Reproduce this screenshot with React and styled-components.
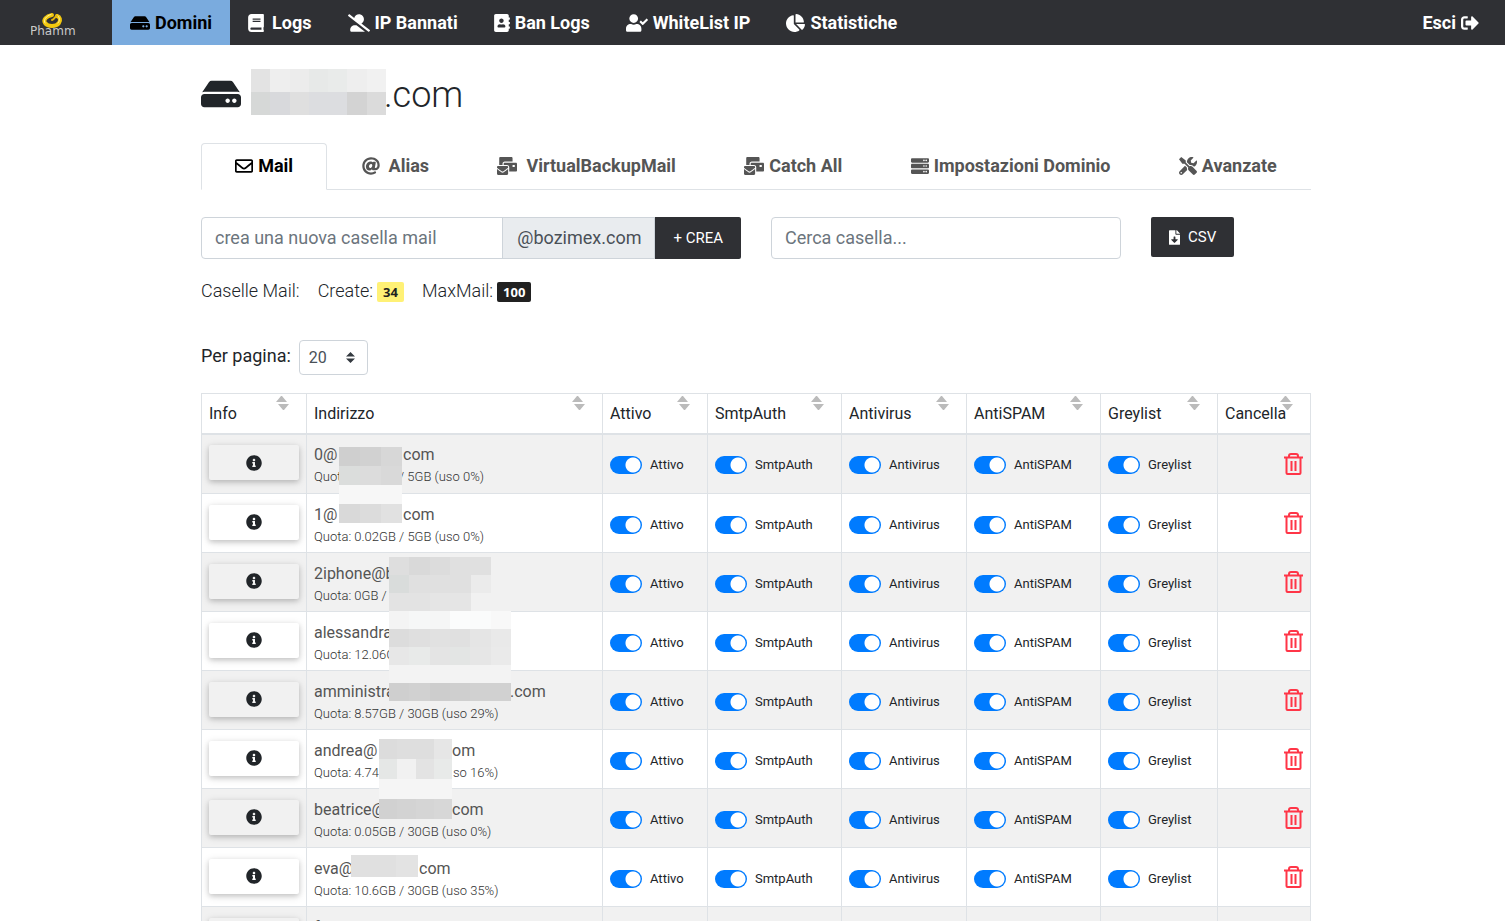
import React from "react";
import styled, { createGlobalStyle, css } from "styled-components";
import {
  FaHdd, FaBook, FaUserAltSlash, FaAddressBook, FaUserCheck, FaChartPie, FaSignOutAlt,
  FaRegEnvelope, FaAt, FaMailBulk, FaServer, FaTools, FaFileDownload, FaInfoCircle,
} from "react-icons/fa";

const GlobalStyle = createGlobalStyle`
  *, *::before, *::after { box-sizing: border-box; }
  body {
    margin: 0;
    background: #fff;
    color: #212529;
    font-family: Roboto, "Liberation Sans", sans-serif;
    font-size: 16px;
    line-height: 24px;
  }
  button, input, select { font-family: inherit; margin: 0; }
`;

/* Font Awesome glyphs differ in width, so each use gives the width of its glyph. */
const iconSize = css`
  svg { height: 1em; width: ${(p) => p.$icon || 18}px; flex: none; }
`;

const NavBar = styled.nav`
  display: flex;
  height: 45px;
  background: #2f3034;
`;

const Brand = styled.a`
  width: 112px;
  padding: 12px 0 0 31px;
  svg { display: block; }
`;

const NavLink = styled.a`
  display: flex;
  align-items: center;
  gap: ${(p) => (p.$wide ? 8 : 5)}px;
  padding: 0 18px;
  font-size: 18px;
  font-weight: 700;
  text-decoration: none;
  white-space: nowrap;
  color: ${(p) => (p.$active ? "#000" : "#fff")};
  background: ${(p) => (p.$active ? "#7aabde" : "transparent")};
  ${iconSize}
`;

const LogoutLink = styled(NavLink)`
  margin-left: auto;
  padding-right: 26px;
`;

const Main = styled.main`
  padding: 24px 0 24px 7px;
`;

const Container = styled.div`
  max-width: 1110px;
  margin: 0 auto;
`;

const Title = styled.h1`
  display: flex;
  align-items: center;
  gap: 10px;
  margin: 0 0 28px;
  font-size: 36px;
  line-height: 46px;
  font-weight: 300;
  > svg { height: 40px; width: 40px; margin-top: 3px; }
`;

const TitleText = styled.span`
  display: flex;
  padding-top: 6px;
  line-height: 40px;
`;

const Tabs = styled.div`
  display: flex;
  border-bottom: 1px solid #dee2e6;
`;

const Tab = styled.button`
  display: flex;
  flex: 1 1 auto;
  align-items: center;
  justify-content: center;
  gap: ${(p) => (p.$wide ? 9 : 5)}px;
  height: 47px;
  margin-bottom: -1px;
  padding: 0 16px 2px;
  border: 1px solid ${(p) => (p.$active ? "#dee2e6" : "transparent")};
  border-bottom-color: ${(p) => (p.$active ? "#fff" : "transparent")};
  border-radius: 4px 4px 0 0;
  background: ${(p) => (p.$active ? "#fff" : "transparent")};
  color: ${(p) => (p.$active ? "#000" : "#555")};
  font-size: 18px;
  font-weight: 700;
  white-space: nowrap;
  ${iconSize}
`;

const Controls = styled.div`
  display: grid;
  grid-template-columns: repeat(12, 1fr);
  gap: 30px;
  align-items: start;
  margin-top: 27px;
`;

const CreateGroup = styled.form`
  grid-column: span 6;
  display: flex;
  height: 42px;
`;

const TextField = styled.input`
  flex: 1;
  width: 100%;
  min-width: 0;
  height: 42px;
  padding: 0 13px 2px;
  border: 1px solid #ced4da;
  border-radius: ${(p) => (p.$joined ? "4px 0 0 4px" : "4px")};
  font-size: 18px;
  color: #495057;
  &::placeholder { color: #6c757d; opacity: 1; }
`;

const Suffix = styled.span`
  display: flex;
  align-items: center;
  margin-left: -1px;
  padding: 0 13px 0 14px;
  border: 1px solid #ced4da;
  background: #e9ecef;
  color: #495057;
  font-size: 18px;
`;

const DarkButton = styled.button`
  display: flex;
  align-items: center;
  gap: 8px;
  height: ${(p) => (p.$joined ? 42 : 40)}px;
  padding: 0 18px;
  border: 0;
  border-radius: ${(p) => (p.$joined ? "0 2px 2px 0" : "2px")};
  background: #2f3034;
  color: #fff;
  font-size: 15px;
  white-space: nowrap;
  ${iconSize}
`;

const SearchBox = styled.div`
  grid-column: span 4;
  display: flex;
`;

const Export = styled.div`
  grid-column: span 2;
`;

const Summary = styled.div`
  display: flex;
  align-items: center;
  gap: 18px;
  margin-top: 20px;
  font-size: 18px;
  font-weight: 300;
`;

const Badge = styled.strong`
  display: inline-block;
  margin-left: 4px;
  padding: 0 6px;
  border-radius: 2px;
  background: ${(p) => (p.$dark ? "#212121" : "#fff176")};
  color: ${(p) => (p.$dark ? "#fff" : "#212121")};
  font: 700 13px/20px "Open Sans", sans-serif;
`;

const PageSize = styled.label`
  display: flex;
  align-items: flex-start;
  gap: 8px;
  margin: 37px 0 18px;
  height: 35px;
  font-size: 18px;
  line-height: 32px;
`;

const SelectWrap = styled.span`
  position: relative;
  display: flex;
  svg { position: absolute; right: 13px; top: 12px; pointer-events: none; }
`;

const Select = styled.select`
  appearance: none;
  width: 69px;
  height: 35px;
  padding: 0 9px;
  border: 1px solid #ced4da;
  border-radius: 4px;
  background: #fff;
  color: #495057;
  font-size: 16px;
`;

const Table = styled.table`
  width: 100%;
  table-layout: fixed;
  border-collapse: collapse;
`;

const HeadCell = styled.th`
  position: relative;
  height: 40px;
  padding: 2px 7px 0;
  border: 1px solid #dee2e6;
  border-bottom-width: 2px;
  font-weight: 400;
  text-align: left;
  > svg { position: absolute; right: 17px; top: 2px; }
`;

const Row = styled.tr`
  height: 59px;
  background: #fff;
  &:nth-child(odd) { background: #f1f1f1; }
  &:first-child { height: 60px; }
`;

const Cell = styled.td`
  position: relative;
  padding: 0 7px;
  border: 1px solid #dee2e6;
`;

const AddressCell = styled(Cell)`
  padding-top: 3px;
`;

const ActionCell = styled(Cell)`
  padding-bottom: 2px;
  text-align: right;
`;

const InfoButton = styled.button`
  display: flex;
  align-items: center;
  justify-content: center;
  width: 100%;
  height: 35px;
  padding: 0;
  border: 0;
  border-radius: 2px;
  background: transparent;
  color: #212529;
  font-size: 16px;
  box-shadow: 0 2px 5px rgba(0, 0, 0, 0.16), 0 2px 10px rgba(0, 0, 0, 0.12);
`;

const Line = styled.div`
  display: flex;
  white-space: pre;
  color: ${(p) => (p.$small ? "#333" : "#555")};
  font-size: ${(p) => (p.$small ? 13 : 16)}px;
  font-weight: ${(p) => (p.$small ? 300 : 400)};
  line-height: ${(p) => (p.$small ? 20 : 24)}px;
`;

const Lead = styled.span`
  flex: none;
  width: ${(p) => (p.$width ? `${p.$width}px` : "auto")};
`;

const MosaicGrid = styled.span`
  position: absolute;
  z-index: 1;
  left: ${(p) => p.$left}px;
  top: ${(p) => p.$top}px;
  width: ${(p) => p.$width}px;
  display: grid;
  grid-template-columns: repeat(${(p) => p.$cols}, 1fr);
  grid-auto-rows: ${(p) => p.$tile}px;
`;

const TitleMosaic = styled.span`
  display: grid;
  grid-template-columns: repeat(7, 1fr);
  grid-auto-rows: 23px;
  width: 135px;
  margin-right: -12px;
`;

const Tile = styled.span`
  background: ${(p) => p.$tone};
`;

const Toggle = styled.label`
  display: flex;
  align-items: center;
  gap: 8px;
  padding-top: 3px;
  font-size: 13px;
  line-height: 18px;
`;

const Switch = styled.input`
  appearance: none;
  flex: none;
  width: 32px;
  height: 18px;
  border-radius: 9px;
  background: radial-gradient(circle at 23px 9px, #fff 7px, #007bff 8px);
  &:not(:checked) {
    background: radial-gradient(circle at 9px 9px, #fff 7px, #adb5bd 8px);
  }
`;

const DeleteButton = styled.button`
  padding: 0;
  border: 0;
  background: none;
  vertical-align: middle;
  svg { display: block; }
`;

const Logo = () => (
  <svg width="48" height="26" viewBox="0 0 48 26" role="img" aria-label="Phamm">
    <g fill="none" strokeLinecap="round">
      <path d="M21 3 C15 4 12 8 14 11 C17 15 25 15 28 11 C30 8 29 5 26 4" stroke="#f2c80f" strokeWidth="4" />
      <path d="M26 4 C23 5 24 7 21 8" stroke="#e5b60a" strokeWidth="2" />
      <path d="M20 2.500 C15 4 12 8 14 11 M27 4 C29 6 29 9 27 11" stroke="#fff3a0" strokeWidth="1" />
    </g>
    <text x="-1" y="23" fill="#c9c9c9" fontFamily="DejaVu Sans" fontSize="12">Phamm</text>
  </svg>
);

const SortArrows = () => (
  <svg width="13" height="14" viewBox="0 0 13 14" fill="#bbb" aria-hidden="true">
    <path d="M0 6 L5 0 H6 L11 6 Z M2 8 H13 L8 14 H7 Z" />
  </svg>
);

const SelectArrows = () => (
  <svg width="9" height="11" viewBox="0 0 9 11" fill="#343a40" aria-hidden="true">
    <path d="M0 4.500 L4.500 0 L9 4.500 Z M0 6.500 H9 L4.500 11 Z" />
  </svg>
);

const TrashIcon = () => (
  <svg width="19" height="22" viewBox="0 0 19 22" fill="none" stroke="#ff3547" strokeWidth="2" aria-hidden="true">
    <path d="M0 4.500 H19 M5 4 V3 Q5 1 7 1 H12 Q14 1 14 3 V4 M2.500 4.500 V20 Q2.500 21 3.500 21 H15.500 Q16.500 21 16.500 20 V4.500 M7.500 8 V18 M11.500 8 V18" />
  </svg>
);

const Mosaic = ({ left, top, width, tile, rows }) => (
  <MosaicGrid $left={left} $top={top} $width={width} $tile={tile} $cols={rows[0].length} aria-hidden="true">
    {rows.flat().map((tone, i) => <Tile key={i} $tone={tone} />)}
  </MosaicGrid>
);

const navItems = [
  { label: "Domini", icon: FaHdd, size: 20, active: true },
  { label: "Logs", icon: FaBook, size: 16, wide: true },
  { label: "IP Bannati", icon: FaUserAltSlash, size: 22 },
  { label: "Ban Logs", icon: FaAddressBook, size: 16 },
  { label: "WhiteList IP", icon: FaUserCheck, size: 22 },
  { label: "Statistiche", icon: FaChartPie, size: 19 },
];

const tabs = [
  { label: "Mail", icon: FaRegEnvelope, size: 18, active: true },
  { label: "Alias", icon: FaAt, size: 18, wide: true },
  { label: "VirtualBackupMail", icon: FaMailBulk, size: 20, wide: true },
  { label: "Catch All", icon: FaMailBulk, size: 20 },
  { label: "Impostazioni Dominio", icon: FaServer, size: 18 },
  { label: "Avanzate", icon: FaTools, size: 18 },
];

const titleTones = [
  "#e3e3e3", "#eee", "#ececec", "#e7e9e8", "#e9ebea", "#eee", "#f1f1f1",
  "#d6d8d7", "#d8d9dc", "#dfdfdf", "#dcdde0", "#dcdde0", "#d3d3d3", "#dbdbdb",
];

const columns = [
  { label: "Info", width: 105 },
  { label: "Indirizzo" },
  { label: "Attivo", width: 105 },
  { label: "SmtpAuth", width: 134 },
  { label: "Antivirus", width: 125 },
  { label: "AntiSPAM", width: 134 },
  { label: "Greylist", width: 117 },
  { label: "Cancella", width: 93 },
];

const toggles = ["Attivo", "SmtpAuth", "Antivirus", "AntiSPAM", "Greylist"];

/* Each line is [start, end, width of the start]; the masked part lies between them. */
const mailboxes = [
  {
    name: ["0@", "com", 89], quota: ["Quota:", "/ 5GB (uso 0%)", 85],
    mask: { left: 32, top: 12, width: 63, tile: 19, rows: [["#cfcfcf", "#d1d1d1", "#d7d7d7"], ["#dbdddc", "#dcdcdc", "#d9d9d9"], ["#f7f7f7", "#f7f7f7", "#f7f7f7"], ["#d9d9d9", "#dcdcdc", "#e1e1e1"]] },
  },
  { name: ["1@", "com", 89], quota: ["Quota: 0.02GB / 5GB (uso 0%)"] },
  {
    name: ["2iphone@b"], quota: ["Quota: 0GB /"],
    mask: { left: 82, top: 4, width: 102, tile: 18, rows: [["#dedede", "#d9d9d9", "#dcdcdc", "#e0e0e0", "#e0e0e0"], ["#d9dcdb", "#e0e0e0", "#e0e0e0", "#e0e0e0", "#ebebeb"], ["#e3e3e3", "#e3e3e3", "#e5e5e5", "#e5e5e5", "#f1f1f1"]] },
  },
  {
    name: ["alessandra"], quota: ["Quota: 12.06G"],
    mask: { left: 82, top: -1, width: 122, tile: 18, rows: [["#f4f4f4", "#f6f7f7", "#f5f6f6", "#fbfcfc", "#fafbfb", "#f8f8f8"], ["#dcdcdc", "#dfdfdf", "#e1e1e1", "#e0e0e0", "#e5e5e5", "#e9e9e9"], ["#e7e7e7", "#e8eae9", "#e4e4e4", "#e3e5e4", "#e6e6e6", "#eaeaea"], ["#f3f3f3", "#f3f3f3", "#f3f3f3", "#f3f3f3", "#f3f3f3", "#f3f3f3"], ["#cfcfcf", "#d1d1d1", "#cdcdcd", "#cfcfcf", "#d1d1d1", "#d1d1d1"]] },
  },
  { name: ["amministra", ".com", 196], quota: ["Quota: 8.57GB / 30GB (uso 29%)"] },
  {
    name: ["andrea@", "om", 138], quota: ["Quota: 4.74", "so 16%)", 139],
    mask: { left: 72, top: 9, width: 73, tile: 20, rows: [["#dcdcdc", "#dedede", "#dedede", "#e6e6e6"], ["#e5e7e6", "#f1f1f1", "#e3e3e3", "#e8eae9"], ["#f5f5f5", "#f5f5f5", "#f5f5f5", "#f5f5f5"], ["#d1d1d1", "#d3d3d3", "#d5d5d5", "#d7d7d7"]] },
  },
  { name: ["beatrice@", "com", 138], quota: ["Quota: 0.05GB / 30GB (uso 0%)"] },
  {
    name: ["eva@", "com", 105], quota: ["Quota: 10.6GB / 30GB (uso 35%)"],
    mask: { left: 44, top: 7, width: 67, tile: 22, rows: [["#e0e0e0", "#e0e0e0", "#e3e3e3"]] },
  },
  { name: ["f"], quota: ["Quota:"] },
];

const MaskedLine = ({ parts: [start, end, width], small }) => (
  <Line $small={small}>
    <Lead $width={width}>{start}</Lead>
    {end && <span>{end}</span>}
  </Line>
);

const MailboxRow = ({ box }) => (
  <Row>
    <ActionCell>
      <InfoButton type="button" aria-label="Info"><FaInfoCircle /></InfoButton>
    </ActionCell>
    <AddressCell>
      <MaskedLine parts={box.name} />
      <MaskedLine parts={box.quota} small />
      {box.mask && <Mosaic {...box.mask} />}
    </AddressCell>
    {toggles.map((label) => (
      <Cell key={label}>
        <Toggle><Switch type="checkbox" defaultChecked />{label}</Toggle>
      </Cell>
    ))}
    <ActionCell>
      <DeleteButton type="button" aria-label="Cancella"><TrashIcon /></DeleteButton>
    </ActionCell>
  </Row>
);

export default function App() {
  return (
    <>
      <GlobalStyle />
      <NavBar>
        <Brand href="#"><Logo /></Brand>
        {navItems.map(({ label, icon: Icon, size, active, wide }) => (
          <NavLink key={label} href="#" $icon={size} $active={active} $wide={wide}><Icon />{label}</NavLink>
        ))}
        <LogoutLink href="#">Esci<FaSignOutAlt /></LogoutLink>
      </NavBar>
      <Main>
        <Container>
          <Title>
            <FaHdd />
            <TitleMosaic aria-hidden="true">
              {titleTones.map((tone, i) => <Tile key={i} $tone={tone} />)}
            </TitleMosaic>
            <TitleText>.com</TitleText>
          </Title>
          <Tabs role="tablist">
            {tabs.map(({ label, icon: Icon, size, active, wide }) => (
              <Tab key={label} type="button" role="tab" aria-selected={!!active} $icon={size} $active={active} $wide={wide}>
                <Icon />{label}
              </Tab>
            ))}
          </Tabs>
          <Controls>
            <CreateGroup onSubmit={(e) => e.preventDefault()}>
              <TextField $joined aria-label="crea una nuova casella mail" placeholder="crea una nuova casella mail" />
              <Suffix>@bozimex.com</Suffix>
              <DarkButton $joined>+ CREA</DarkButton>
            </CreateGroup>
            <SearchBox>
              <TextField aria-label="Cerca casella" placeholder="Cerca casella..." />
            </SearchBox>
            <Export>
              <DarkButton type="button" $icon={11}><FaFileDownload />CSV</DarkButton>
            </Export>
          </Controls>
          <Summary>
            <span>Caselle Mail:</span>
            <span>Create:<Badge>34</Badge></span>
            <span>MaxMail:<Badge $dark>100</Badge></span>
          </Summary>
          <PageSize>
            Per pagina:
            <SelectWrap>
              <Select defaultValue="20"><option>20</option><option>50</option><option>100</option></Select>
              <SelectArrows />
            </SelectWrap>
          </PageSize>
          <Table>
            <colgroup>
              {columns.map((c) => <col key={c.label} width={c.width} />)}
            </colgroup>
            <thead>
              <tr>
                {columns.map((c) => <HeadCell key={c.label} scope="col">{c.label}<SortArrows /></HeadCell>)}
              </tr>
            </thead>
            <tbody>
              {mailboxes.map((box) => <MailboxRow key={box.name[0]} box={box} />)}
            </tbody>
          </Table>
        </Container>
      </Main>
    </>
  );
}
